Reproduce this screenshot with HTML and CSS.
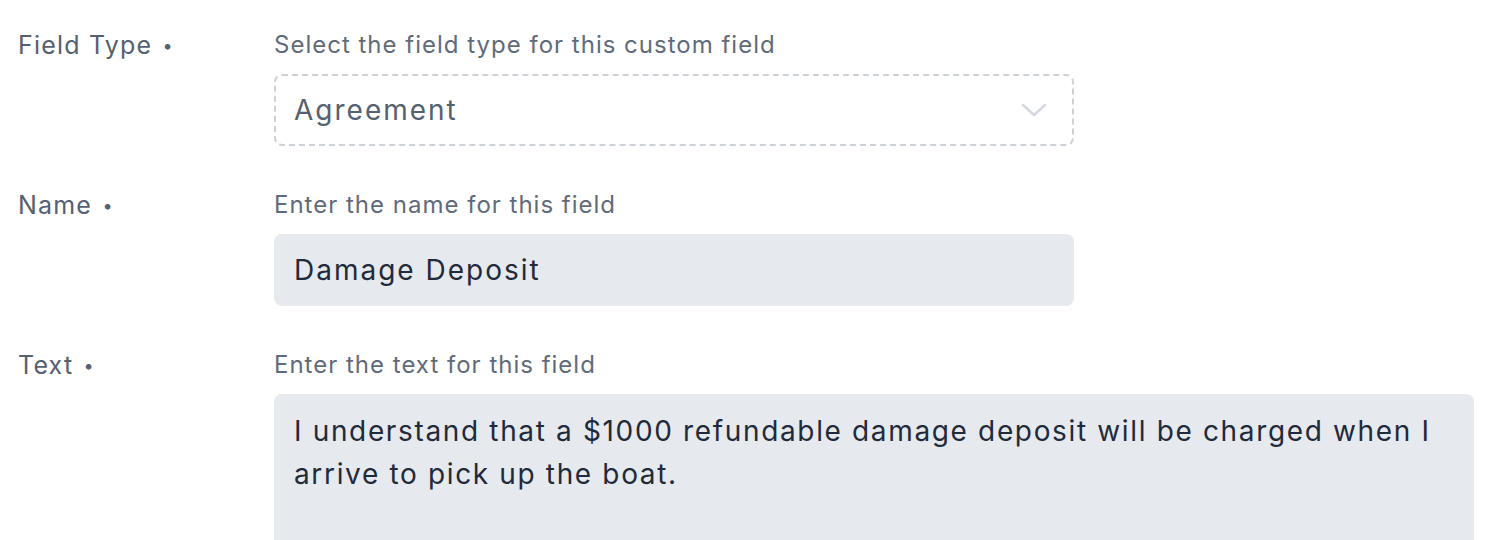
FILE: index.html
```html
<!DOCTYPE html>
<html>
<head>
<meta charset="utf-8">
<link rel="stylesheet" href="styles.css">
</head>
<body>
<div class="form">
  <div class="row">
    <div class="label">Field Type <span class="dot">•</span></div>
    <div class="field">
      <div class="help">Select the field type for this custom field</div>
      <div class="select">
        <span>Agreement</span>
        <svg class="chev" width="26" height="14" viewBox="0 0 26 14"><path d="M2 2 L13 12 L24 2" fill="none" stroke="#d5d9df" stroke-width="2.6" stroke-linecap="round" stroke-linejoin="round"/></svg>
      </div>
    </div>
  </div>
  <div class="row">
    <div class="label">Name <span class="dot">•</span></div>
    <div class="field">
      <div class="help">Enter the name for this field</div>
      <div class="input">Damage Deposit</div>
    </div>
  </div>
  <div class="row">
    <div class="label">Text <span class="dot">•</span></div>
    <div class="field">
      <div class="help">Enter the text for this field</div>
      <div class="textarea">I understand that a $1000 refundable damage deposit will be charged when I arrive to pick up the boat.</div>
    </div>
  </div>
</div>
</body>
</html>
```
FILE: styles.css
```css
* { box-sizing: border-box; }
html, body { margin: 0; padding: 0; background: #fff; overflow: hidden; }
body { font-family: Inter, "Noto Sans", sans-serif; }
.form { padding-top: 30px; display: flex; flex-direction: column; gap: 44px; }
.row { display: grid; grid-template-columns: 274px 1200px; }
.label { padding-left: 18px; font-size: 25px; line-height: 30px; color: #556070; letter-spacing: 1.2px; }
.dot { font-size: 18px; position: relative; top: -2px; margin-left: 2px; }
.field { display: flex; flex-direction: column; gap: 14px; }
.help { font-size: 24px; line-height: 30px; color: #5f6b7b; letter-spacing: 1px; }
.select {
  width: 800px; height: 72px; border: 2px dashed #cdd2d9; border-radius: 8px;
  display: flex; align-items: center; justify-content: space-between;
  padding: 0 25px 0 18px; font-size: 28px; color: #556070; letter-spacing: 2px;
}
.input {
  width: 800px; height: 72px; background: #e6e9ee; border-radius: 8px;
  display: flex; align-items: center; padding: 0 20px; font-size: 28px; color: #1f2a3b; letter-spacing: 2px;
}
.textarea {
  width: 1200px; height: 200px; background: #e6e9ee; border-radius: 8px;
  padding: 16px 20px; font-size: 28px; line-height: 43px; color: #1f2a3b; letter-spacing: 1.65px;
}
```
